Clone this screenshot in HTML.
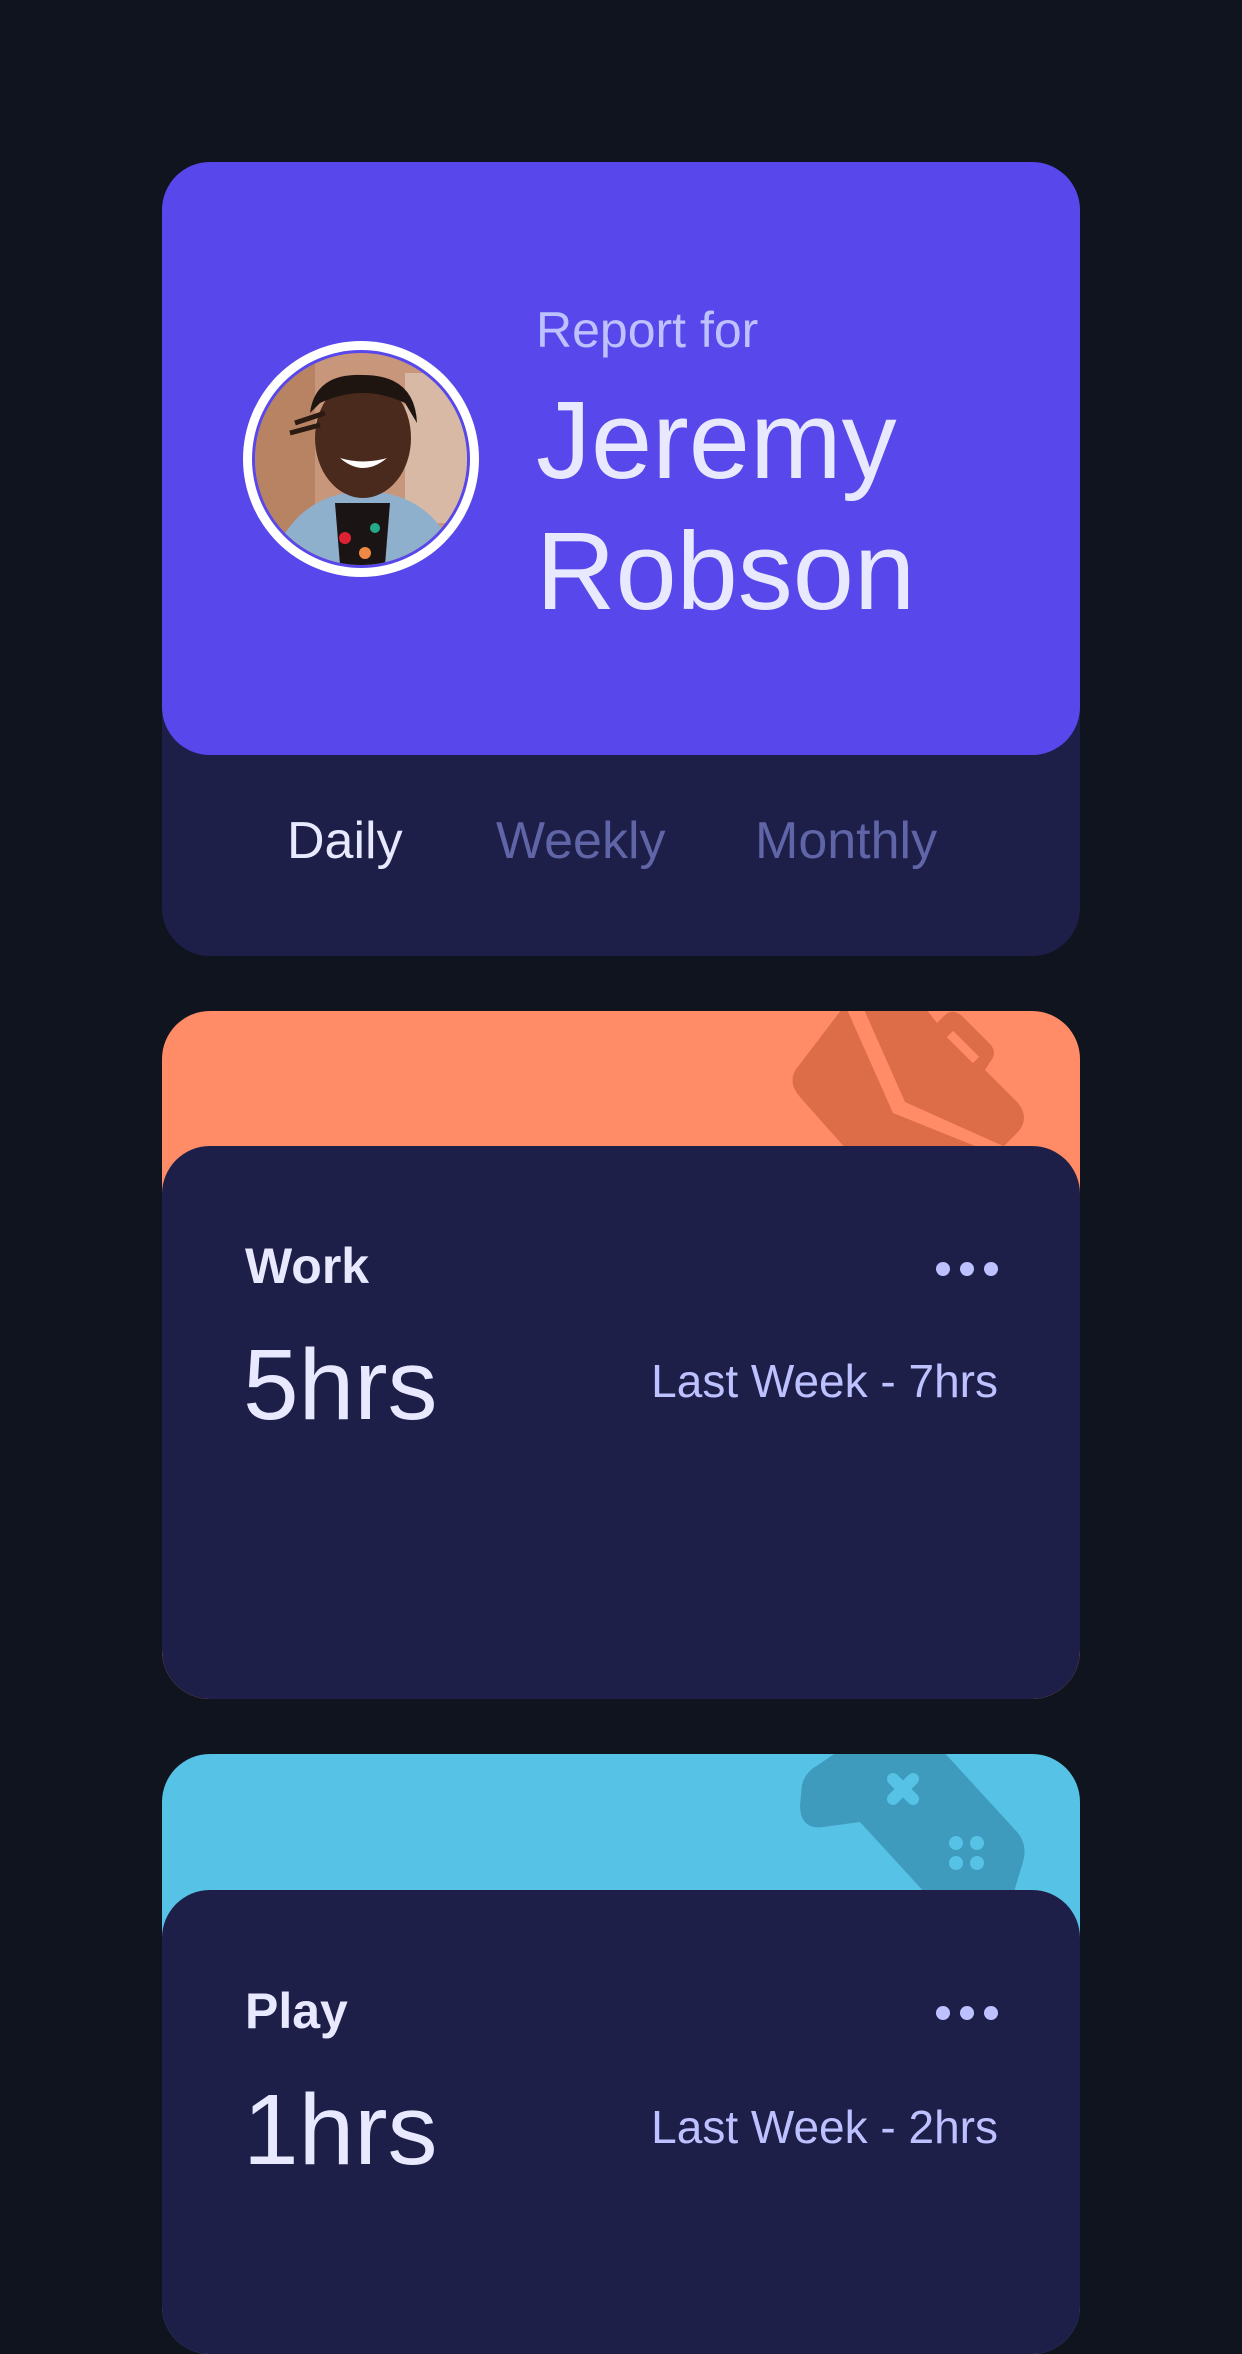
<!DOCTYPE html>
<html><head><meta charset="utf-8"><style>
*{margin:0;padding:0;box-sizing:border-box}
body{width:1242px;height:2208px;background:#10141f;font-family:"Liberation Sans",sans-serif;position:relative;overflow:hidden}
.abs{position:absolute}
.card{position:absolute;left:162px;width:918px;border-radius:48px;overflow:hidden}
.t{position:absolute;white-space:nowrap;line-height:1}
</style></head><body>
<div class="card" style="top:162px;height:794px;background:#1d1f48"></div>
<div class="card" style="top:162px;height:593px;background:#5847ea"></div>
<div class="abs" style="left:243px;top:341px;width:236px;height:236px;border-radius:50%;background:#fff;padding:9px">
 <div style="width:218px;height:218px;border-radius:50%;background:#5847ea;padding:3px">
  <svg width="212" height="212" viewBox="0 0 212 212" style="border-radius:50%;display:block">
   <rect width="212" height="212" fill="#c8967a"/>
   <rect x="0" y="0" width="60" height="212" fill="#b88363"/>
   <rect x="150" y="20" width="62" height="150" fill="#d7b9a5"/>
   <path d="M20 200 Q40 150 90 140 L130 140 Q180 150 200 200 L200 212 L20 212Z" fill="#8fb0cc"/>
   <path d="M80 150 L135 150 L130 212 L85 212Z" fill="#1a1414"/>
   <circle cx="90" cy="185" r="6" fill="#d23"/><circle cx="120" cy="175" r="5" fill="#2a8"/><circle cx="110" cy="200" r="6" fill="#e84"/>
   <ellipse cx="108" cy="85" rx="48" ry="60" fill="#4a2a1c"/>
   <path d="M55 60 Q60 20 108 22 Q160 22 162 70 L150 50 Q108 30 65 50Z" fill="#1e1410"/>
   <path d="M40 70 L70 60 M35 80 L65 72" stroke="#2a1a12" stroke-width="5"/>
   <path d="M85 105 Q108 125 132 105 Q108 112 85 105Z" fill="#fff"/>
  </svg>
 </div>
</div>
<div class="t" style="left:536px;top:305px;font-size:50px;color:#bdc1ff">Report for</div>
<div class="t" style="left:536px;top:375px;font-size:110px;color:#e8e9ff;line-height:131px">Jeremy<br>Robson</div>
<div class="t" style="left:287px;top:815px;font-size:52px;color:#e8e9ff">Daily</div>
<div class="t" style="left:496px;top:815px;font-size:52px;color:#6065a8">Weekly</div>
<div class="t" style="left:755px;top:815px;font-size:52px;color:#6065a8">Monthly</div>

<!-- Work -->
<div class="card" style="top:1011px;height:688px;background:#ff8c66">
 <svg class="abs" style="left:0;top:0" width="918" height="200">
  <g transform="translate(-162,-1011)">
   <path d="M845 1005 L923 1005 L937 1023 L945 1015 Q953 1008 962 1016 L990 1044 Q998 1053 990 1062 L985 1070 L1018 1103 Q1030 1118 1018 1132 L1000 1150 L847 1150 L800 1097 Q785 1080 800 1064 Z" fill="#dd6c48"/>
   <path d="M845 1005 L862 1005 L905 1102 L1012 1150 L985 1150 L893 1113 Z" fill="#ff8c66"/>
   <path d="M950 1034 L976 1060" stroke="#ff8c66" stroke-width="9"/>
  </g>
 </svg>
 <div class="abs" style="left:0;top:135px;width:918px;height:553px;background:#1d1f48;border-radius:48px"></div>
</div>
<div class="t" style="left:245px;top:1241px;font-size:50px;font-weight:bold;color:#e8e9ff">Work</div>
<div class="abs" style="left:936px;top:1262px;width:14px;height:14px;border-radius:50%;background:#bdc1ff;box-shadow:24px 0 #bdc1ff,48px 0 #bdc1ff"></div>
<div class="t" style="left:243px;top:1335px;font-size:100px;color:#e8e9ff">5hrs</div>
<div class="t" style="right:244px;top:1358px;font-size:46px;color:#bdc1ff">Last Week - 7hrs</div>

<!-- Play -->
<div class="card" style="top:1754px;height:600px;background:#55c2e6">
 <svg class="abs" style="left:0;top:0" width="918" height="200">
  <g transform="translate(-162,-1754)">
   <path d="M840 1750 L942 1750 L1017 1832 Q1028 1845 1023 1862 L1013 1895 L927 1895 L860 1822 L823 1827 Q800 1830 800 1805 L802 1785 Q805 1772 818 1765 Z" fill="#3e9bbd"/>
   <g stroke="#55c2e6" stroke-width="12" stroke-linecap="round"><path d="M893 1779 L913 1799 M913 1779 L893 1799"/></g>
   <g fill="#55c2e6"><circle cx="956" cy="1843" r="7"/><circle cx="977" cy="1843" r="7"/><circle cx="956" cy="1863" r="7"/><circle cx="977" cy="1863" r="7"/></g>
  </g>
 </svg>
 <div class="abs" style="left:0;top:136px;width:918px;height:500px;background:#1d1f48;border-radius:48px"></div>
</div>
<div class="t" style="left:245px;top:1986px;font-size:50px;font-weight:bold;color:#e8e9ff">Play</div>
<div class="abs" style="left:936px;top:2006px;width:14px;height:14px;border-radius:50%;background:#bdc1ff;box-shadow:24px 0 #bdc1ff,48px 0 #bdc1ff"></div>
<div class="t" style="left:243px;top:2080px;font-size:100px;color:#e8e9ff">1hrs</div>
<div class="t" style="right:244px;top:2104px;font-size:46px;color:#bdc1ff">Last Week - 2hrs</div>
</body></html>
